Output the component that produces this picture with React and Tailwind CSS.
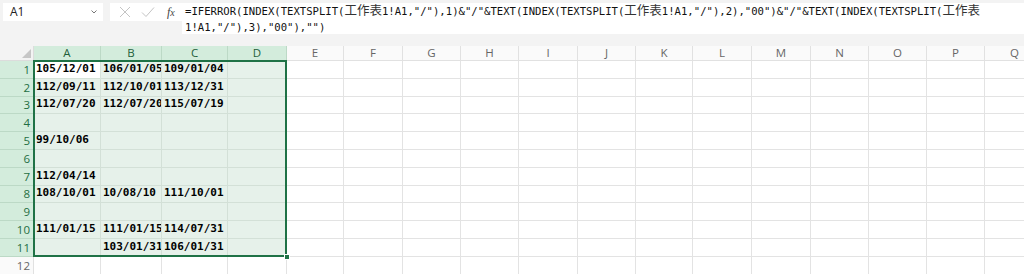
import React from "react";

const cols = [
  { l: "A", w: 67, s: true },
  { l: "B", w: 61, s: true },
  { l: "C", w: 66, s: true },
  { l: "D", w: 59, s: true },
  { l: "E", w: 57 },
  { l: "F", w: 59 },
  { l: "G", w: 58 },
  { l: "H", w: 58 },
  { l: "I", w: 59 },
  { l: "J", w: 58 },
  { l: "K", w: 57 },
  { l: "L", w: 59 },
  { l: "M", w: 59 },
  { l: "N", w: 58 },
  { l: "O", w: 58 },
  { l: "P", w: 58 },
  { l: "Q", w: 60 },
];

const heights = [18, 18, 17, 18, 18, 18, 18, 17, 18, 18, 18, 18];

const data = [
  ["105/12/01", "106/01/05", "109/01/04"],
  ["112/09/11", "112/10/01", "113/12/31"],
  ["112/07/20", "112/07/20", "115/07/19"],
  ["", "", ""],
  ["99/10/06", "", ""],
  ["", "", ""],
  ["112/04/14", "", ""],
  ["108/10/01", "10/08/10", "111/10/01"],
  ["", "", ""],
  ["111/01/15", "111/01/15", "114/07/31"],
  ["", "103/01/31", "106/01/31"],
  ["", "", ""],
];

const mono = { fontFamily: '"DejaVu Sans Mono", "Liberation Mono", "Noto Sans CJK TC", monospace' };
const sans = { fontFamily: '"Open Sans", "Noto Sans", sans-serif' };

function CJK({ children }) {
  return (
    <span className="text-[12.5px] leading-[0] text-[#333]" style={{ fontFamily: '"Noto Sans CJK TC", sans-serif' }}>
      {children}
    </span>
  );
}

export default function App() {
  return (
    <div className="w-[1024px] h-[274px] overflow-hidden bg-white relative">
      {/* formula bar */}
      <div className="h-[46px] bg-[#f3f3f3] flex items-start pt-[3px] pl-[3px]">
        <div className="w-[100px] h-[18px] bg-white flex items-center justify-between pl-[7px] pr-[5px]">
          <span className="text-[12px] text-[#222]" style={sans}>A1</span>
          <svg width="8" height="6" viewBox="0 0 8 6"><path d="M1.5 1.5 L4 4 L6.5 1.5" fill="none" stroke="#777" strokeWidth="1" /></svg>
        </div>
        <div className="w-[72px] h-[18px] bg-white ml-[7px] flex items-center pl-[9px]">
          <svg width="12" height="12" viewBox="0 0 12 12"><path d="M1 1 L11 11 M11 1 L1 11" stroke="#c4c4c4" strokeWidth="1" /></svg>
          <svg className="ml-[10px]" width="14" height="12" viewBox="0 0 14 12"><path d="M1 6.5 L5 10.5 L13 1.5" fill="none" stroke="#c4c4c4" strokeWidth="1" /></svg>
          <span className="ml-[12px] text-[12px] italic text-[#444]" style={{ fontFamily: '"Liberation Serif", serif' }}>f<span className="text-[10px]">x</span></span>
        </div>
        <div className="flex-1 h-[31px] bg-white pl-[3px] text-[10.6px] text-[#111] leading-[17px] whitespace-nowrap" style={mono}>
          <div className="h-[17px]">=IFERROR(INDEX(TEXTSPLIT(<CJK>工作表</CJK>1!A1,"/"),1)&amp;"/"&amp;TEXT(INDEX(TEXTSPLIT(<CJK>工作表</CJK>1!A1,"/"),2),"00")&amp;"/"&amp;TEXT(INDEX(TEXTSPLIT(<CJK>工作表</CJK></div>
          <div className="h-[14px] leading-[14px]">1!A1,"/"),3),"00"),"")</div>
        </div>
      </div>

      {/* grid */}
      <div className="relative">
        {/* header row */}
        <div className="flex h-[15px]">
          <div className="w-[34px] shrink-0 bg-[#f3f3f3] border-r border-b border-[#dcdcdc] relative flex items-end justify-end pr-[2px] pb-[2px]">
            <svg width="9" height="9" viewBox="0 0 9 9"><path d="M9 0 L9 9 L0 9 Z" fill="#c6c6c6" /></svg>
          </div>
          {cols.map((c) => (
            <div
              key={c.l}
              className={
                "shrink-0 flex items-center justify-center text-[11.5px] border-r border-b " +
                (c.s ? "bg-[#d3ecdc] border-r-[#bcd9c6] border-b-[#1f7246] text-[#1f5f3a]" : "bg-[#fafafa] border-[#e1e1e1] text-[#666]")
              }
              style={{ width: c.w, ...sans }}
            >
              {c.l}
            </div>
          ))}
        </div>
        {/* rows */}
        {data.map((row, r) => {
          const sel = r < 11;
          return (
            <div key={r} className="flex" style={{ height: heights[r] }}>
              <div
                className={
                  "w-[34px] shrink-0 flex items-end justify-end pr-[3px] pb-[0px] text-[11.5px] border-b border-r " +
                  (sel ? "bg-[#d3ecdc] text-[#1f6e43] border-b-[#bcd9c6] border-r-[#1f7246]" : "bg-[#fafafa] text-[#666] border-[#e1e1e1]")
                }
                style={sans}
              >
                {r + 1}
              </div>
              {cols.map((c, ci) => {
                const inSel = sel && c.s;
                const white = r === 0 && ci === 0;
                const txt = ci < 3 ? row[ci] : "";
                return (
                  <div
                    key={c.l}
                    className={
                      "shrink-0 border-r border-b overflow-hidden whitespace-nowrap flex items-end pl-[2px] pb-[1px] text-[11px] font-bold text-black " +
                      (white ? "bg-white border-[#d6e3da]" : inSel ? "bg-[#e6f1ea] border-[#d3e0d7]" : "bg-white border-[#e3e3e3]")
                    }
                    style={{ width: c.w, ...mono }}
                  >
                    {txt}
                  </div>
                );
              })}
            </div>
          );
        })}
        {/* selection border */}
        <div className="absolute left-[33px] top-[14px] w-[254px] h-[197px] border-2 border-[#1f7246] pointer-events-none" />
        <div className="absolute left-[284px] top-[208px] w-[6px] h-[6px] bg-[#1f7246] border border-white" />
      </div>
    </div>
  );
}
